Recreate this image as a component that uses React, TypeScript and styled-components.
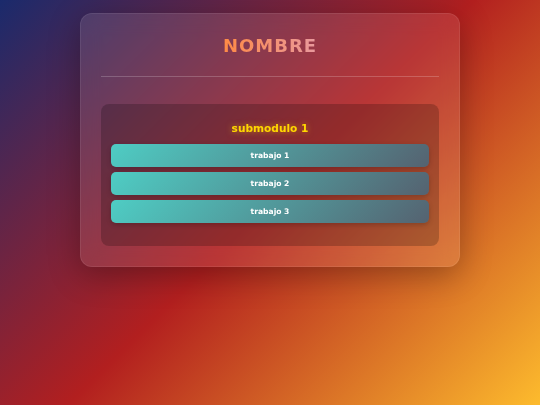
import styled, { createGlobalStyle } from "styled-components";

const GlobalStyle = createGlobalStyle`
  * {
    box-sizing: border-box;
  }
  html, body {
    margin: 0;
    padding: 0;
  }
  body {
    min-height: 100vh;
    font-family: "DejaVu Sans", Verdana, sans-serif;
    background: linear-gradient(135deg, #1a2a6c 0%, #b21f1f 50%, #fdbb2d 100%);
    background-attachment: fixed;
  }
`;

const trabajos = ["trabajo 1", "trabajo 2", "trabajo 3"];

export default function App() {
  return (
    <>
      <GlobalStyle />
      <Page>
        <Card>
          <Header>
            <Title>NOMBRE</Title>
          </Header>
          <Submodule>
            <SubTitle>submodulo 1</SubTitle>
            <JobList>
              {trabajos.map((t) => (
                <JobButton key={t}>{t}</JobButton>
              ))}
            </JobList>
          </Submodule>
        </Card>
      </Page>
    </>
  );
}

const Page = styled.div`
  min-height: 100vh;
  padding: 13px 20px;
  display: flex;
  justify-content: center;
  align-items: flex-start;
`;

const Card = styled.div`
  width: 380px;
  padding: 20px;
  border-radius: 12px;
  background: rgba(255, 255, 255, 0.1);
  border: 1px solid rgba(255, 255, 255, 0.08);
  box-shadow: 0 8px 32px rgba(0, 0, 0, 0.3);
  backdrop-filter: blur(10px);
`;

const Header = styled.div`
  padding: 0 0 18px;
  border-bottom: 1px solid rgba(255, 255, 255, 0.2);
  margin-bottom: 27px;
  text-align: center;
`;

const Title = styled.h1`
  margin: 0;
  font-size: 18px;
  line-height: 24px;
  font-weight: bold;
  letter-spacing: 1px;
  background: linear-gradient(90deg, #ff8a45, #e9999e);
  -webkit-background-clip: text;
  background-clip: text;
  color: transparent;
  display: inline-block;
`;

const Submodule = styled.div`
  padding: 16px 10px 23px;
  border-radius: 8px;
  background: rgba(0, 0, 0, 0.2);
`;

const SubTitle = styled.h2`
  margin: 0 0 8px;
  text-align: center;
  font-size: 10.6px;
  line-height: 16px;
  font-weight: bold;
  color: #ffd700;
  text-shadow: 0 0 6px rgba(255, 215, 0, 0.5);
`;

const JobList = styled.div`
  display: flex;
  flex-direction: column;
  gap: 5px;
`;

const JobButton = styled.button`
  height: 23px;
  border: none;
  border-radius: 5px;
  font-family: inherit;
  font-size: 7.6px;
  font-weight: bold;
  color: #fff;
  background: linear-gradient(135deg, #4ecdc4, #556270);
  box-shadow: 0 2px 5px rgba(0, 0, 0, 0.2);
  cursor: pointer;
`;
